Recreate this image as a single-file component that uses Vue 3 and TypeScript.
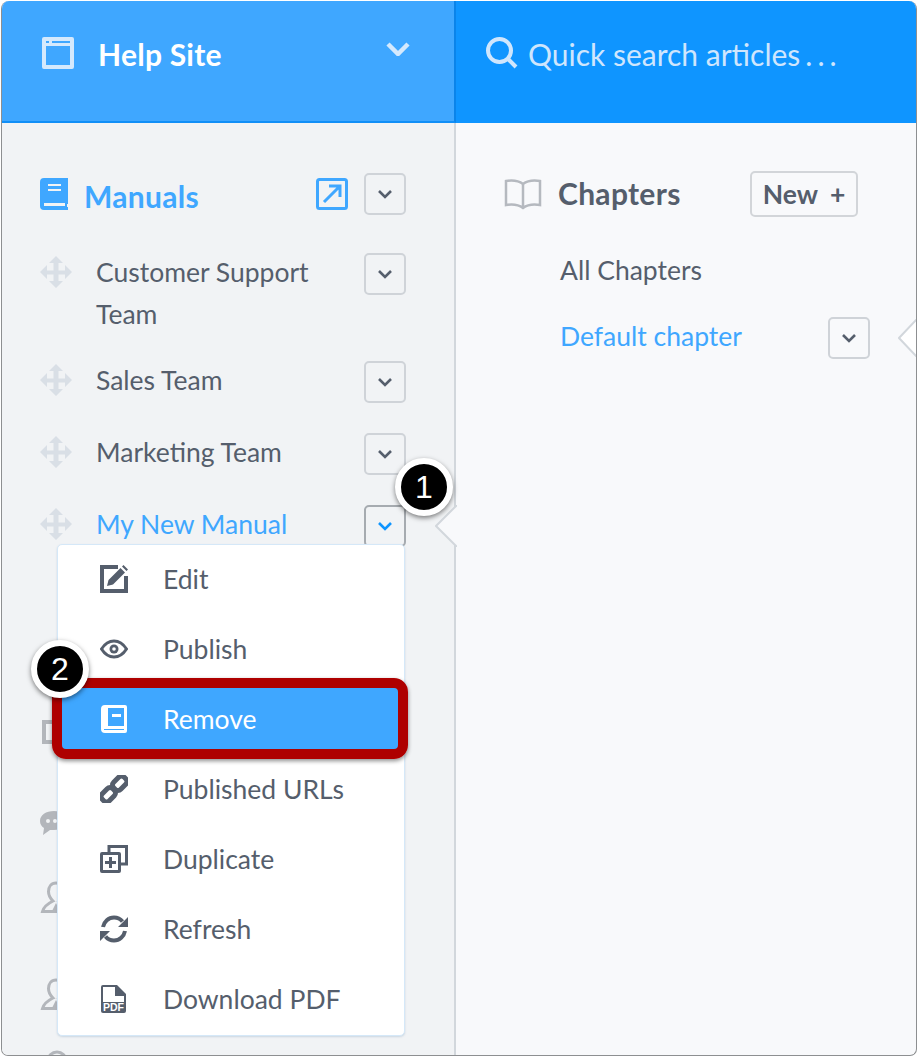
<script setup lang="ts">
interface MenuItem {
  label: string
  icon: string
  active?: boolean
}

const manuals = [
  { name: 'Customer Support Team' },
  { name: 'Sales Team' },
  { name: 'Marketing Team' },
  { name: 'My New Manual', active: true },
]

const menuItems: MenuItem[] = [
  { label: 'Edit', icon: 'edit' },
  { label: 'Publish', icon: 'eye' },
  { label: 'Remove', icon: 'book', active: true },
  { label: 'Published URLs', icon: 'link' },
  { label: 'Duplicate', icon: 'copy' },
  { label: 'Refresh', icon: 'refresh' },
  { label: 'Download PDF', icon: 'pdf' },
]
</script>

<template>
  <div class="window">
    <header class="topbar">
      <div class="site">
        <svg class="site-icon" viewBox="0 0 32 32">
          <path fill-rule="evenodd" d="M2 0h28a2 2 0 0 1 2 2v28a2 2 0 0 1-2 2H2a2 2 0 0 1-2-2V2a2 2 0 0 1 2-2zM4 9v19h24V9zM4 4v2h3V4zm6 0v2h18V4z" />
        </svg>
        <span class="site-name">Help Site</span>
        <svg class="site-chevron" viewBox="0 0 24 14">
          <path d="M2 2l10 10L22 2" />
        </svg>
      </div>
      <div class="search">
        <svg class="search-icon" viewBox="0 0 32 32">
          <circle cx="13.5" cy="13.5" r="11.5" />
          <path d="M22 22l8 8" />
        </svg>
        <span>Quick search articles<span class="dots">...</span></span>
      </div>
    </header>

    <div class="content">
      <aside class="sidebar">
        <div class="section-head">
          <svg class="book-icon" viewBox="0 0 28 32">
            <path fill-rule="evenodd" d="M4 0h24v26h-1v3h1v3H4a4 4 0 0 1-4-4V4a4 4 0 0 1 4-4zM8 6v2h13V6zm0 5v2h13v-2zM4 25v3h21v-3z" />
          </svg>
          <span class="section-title">Manuals</span>
          <svg class="open-icon" viewBox="0 0 32 32">
            <rect x="1.5" y="1.5" width="29" height="29" rx="2" />
            <path d="M8 24L23 9M13 8h11v11" />
          </svg>
          <button class="chevron-btn" type="button">
            <svg viewBox="0 0 14 9"><path d="M1 1l6 6 6-6" /></svg>
          </button>
        </div>

        <ul class="manuals">
          <li v-for="manual in manuals" :key="manual.name" class="manual" :class="{ active: manual.active }">
            <svg class="move-icon" viewBox="0 0 32 32">
              <path d="M16 0l7 7h-4.500v7.500H25V9l7 7-7 7v-4.500h-6.500V25H23l-7 7-7-7h4.500v-6.500H7V23l-7-7 7-7v5.500h6.500V7H9z" />
            </svg>
            <span class="manual-name">{{ manual.name }}</span>
            <button class="chevron-btn" type="button">
              <svg viewBox="0 0 14 9"><path d="M1 1l6 6 6-6" /></svg>
            </button>
          </li>
        </ul>

        <div class="nav-icons">
          <svg class="nav-box" viewBox="0 0 28 24">
            <path d="M2 2h24v20H2zM12 2v20" />
          </svg>
          <svg class="nav-chat" viewBox="0 0 28 24">
            <path fill-rule="evenodd" d="M14 0C6 0 0 4 0 10c0 3 1.500 5.500 4 7l-1 7 7-5h4c8 0 14-4 14-9S22 0 14 0zM8 8a2 2 0 1 0 0 4 2 2 0 0 0 0-4zm7 0a2 2 0 1 0 0 4 2 2 0 0 0 0-4z" />
          </svg>
          <svg class="nav-person" viewBox="0 0 32 32">
            <path class="person-line" d="M16 2c5 0 7.500 4 7.500 8.500S21 18 19 20c3 1.500 9 4.500 10.500 10.500h-27C4 24.500 10 21.500 13 20c-2-2-4.500-5-4.500-9.500S11 2 16 2z" />
            <path d="M16 22l4 8h-8z" />
          </svg>
          <svg class="nav-person" viewBox="0 0 32 32">
            <path class="person-line" d="M16 2c5 0 7.500 4 7.500 8.500S21 18 19 20c3 1.500 9 4.500 10.500 10.500h-27C4 24.500 10 21.500 13 20c-2-2-4.500-5-4.500-9.500S11 2 16 2z" />
            <path d="M16 22l4 8h-8z" />
          </svg>
          <svg class="nav-circle" viewBox="0 0 24 24">
            <circle class="person-line" cx="12" cy="11" r="9" />
          </svg>
        </div>
      </aside>

      <section class="chapters">
        <div class="chapters-head">
          <svg class="open-book" viewBox="0 0 38 32">
            <path d="M19 6C15 3 8 2 2 3v24c6-1 13 0 17 3 4-3 11-4 17-3V3c-6-1-13 0-17 3zM19 6v24" />
          </svg>
          <span class="chapters-title">Chapters</span>
          <button class="new-btn" type="button">New <i>+</i></button>
        </div>
        <div class="chapter">All Chapters</div>
        <div class="chapter current">
          <span>Default chapter</span>
          <button class="chevron-btn" type="button">
            <svg viewBox="0 0 14 9"><path d="M1 1l6 6 6-6" /></svg>
          </button>
        </div>
      </section>
    </div>

    <svg class="notch notch-sidebar" viewBox="0 0 22 42">
      <path class="notch-fill" d="M22 0L1 21l21 21z" />
      <path class="notch-line" d="M22 0L1 21l21 21" />
    </svg>
    <svg class="notch notch-chapters" viewBox="0 0 19 38">
      <path class="notch-fill white" d="M19 0L1 19l18 19z" />
      <path class="notch-line" d="M19 0L1 19l18 19" />
    </svg>

    <ul class="menu">
      <li v-for="item in menuItems" :key="item.label" class="menu-item" :class="{ active: item.active }">
        <svg class="menu-icon" viewBox="0 0 28 28">
          <template v-if="item.icon === 'edit'">
            <path class="line heavy" d="M18 2H2v24h24V11" />
            <path d="M7 21l1.500-6L20.500 3l4.500 4.500L13 19.500zM22 1.500L23.500 0 28 4.500 26.500 6z" />
          </template>
          <template v-else-if="item.icon === 'eye'">
            <path class="line" d="M1.500 14C5 8.500 9 6 14 6s9 2.500 12.500 8C23 19.500 19 22 14 22S5 19.500 1.500 14z" />
            <circle cx="14" cy="14" r="4.500" />
            <circle class="eye-dot" cx="14" cy="14" r="1.800" />
          </template>
          <template v-else-if="item.icon === 'book'">
            <path fill-rule="evenodd" d="M5 0h20a2 2 0 0 1 2 2v24a2 2 0 0 1-2 2H5a4 4 0 0 1-4-4V4a4 4 0 0 1 4-4zM8 3v18h16V3zM12 9h9v3h-9zM4 24v1h20v-1z" />
          </template>
          <template v-else-if="item.icon === 'link'">
            <g class="line chain">
              <rect x="-8.500" y="-5" width="15" height="10" rx="4" transform="translate(9 19) rotate(-45)" />
              <rect x="-6.500" y="-5" width="15" height="10" rx="4" transform="translate(19 9) rotate(-45)" />
            </g>
          </template>
          <template v-else-if="item.icon === 'copy'">
            <path class="line" d="M9 7V1.500h17.500V19H21" />
            <path fill-rule="evenodd" d="M2 7h17a2 2 0 0 1 2 2v17a2 2 0 0 1-2 2H2a2 2 0 0 1-2-2V9a2 2 0 0 1 2-2zM3 10v15h15V10zM9 12v4H5v3h4v4h3v-4h4v-3h-4v-4z" />
          </template>
          <template v-else-if="item.icon === 'refresh'">
            <path class="line heavy" d="M3 12C4 6.500 8.500 2.500 14 2.500c3.500 0 6.500 1.500 8.500 4M25 16c-1 5.500-5.500 9.500-11 9.500-3.500 0-6.500-1.500-8.500-4" />
            <path d="M28 2v10H18zM0 26V16h10z" />
          </template>
          <template v-else>
            <path d="M3 0h14l9 9v17a2 2 0 0 1-2 2H3a2 2 0 0 1-2-2V2a2 2 0 0 1 2-2z" />
            <path class="eye-dot" d="M3 2h12v9h9v6H3z" />
            <text class="pdf-label" x="13.500" y="25.500" text-anchor="middle">PDF</text>
          </template>
        </svg>
        <span class="menu-label">{{ item.label }}</span>
      </li>
    </ul>

    <div class="highlight"></div>
    <div class="callout callout-one">1</div>
    <div class="callout callout-two">2</div>
  </div>
</template>

<style scoped>
.window {
  position: relative;
  width: 916px;
  height: 1055px;
  margin: 1px 0 0 1px;
  overflow: hidden;
  border-radius: 8px 8px 7px 7px;
  box-sizing: border-box;
  border: solid #8d8f91;
  border-width: 0 1px 1px 1px;
  font-family: Lato, "Noto Sans", sans-serif;
  font-size: 26.5px;
  color: #555e6c;
  background: #f8f9fb;
}

.topbar {
  display: flex;
  height: 122px;
}

.site {
  display: flex;
  width: 454px;
  padding: 36px 44px 0 40px;
  box-sizing: border-box;
  background: #3fa7ff;
  border-right: 2px solid #0a84ea;
  border-bottom: 2px solid #118ff7;
}

.site-icon {
  width: 32px;
  height: 32px;
  fill: #d4e9fd;
}

.site-name {
  margin: -1px 0 0 24px;
  font-size: 30px;
  font-weight: 700;
  letter-spacing: 0.25px;
  line-height: 36px;
  color: #fff;
}

.site-chevron {
  width: 24px;
  height: 14px;
  margin: 5px 0 0 auto;
  fill: none;
  stroke: #d4e9fd;
  stroke-width: 4.5;
}

.search {
  display: flex;
  flex: 1;
  gap: 10px;
  padding: 35px 0 0 30px;
  background: #0f95ff;
  font-size: 30px;
  line-height: 36px;
  color: #cfe6fd;
}

.search-icon {
  width: 32px;
  height: 32px;
  margin-top: 1px;
  fill: none;
  stroke: #cfe6fd;
  stroke-width: 4;
}

.dots {
  margin-left: 5px;
  letter-spacing: 5px;
}

.content {
  display: flex;
  height: 932px;
}

.sidebar {
  width: 454px;
  padding: 49px 48px 0 38px;
  box-sizing: border-box;
  background: #f1f3f5;
  border-right: 2px solid #d2d7dc;
}

.section-head {
  display: flex;
  align-items: center;
  height: 44px;
  margin-bottom: 35px;
}

.book-icon {
  width: 28px;
  height: 32px;
  fill: #3fa7ff;
}

.section-title {
  margin: 3px 0 0 16px;
  font-size: 30px;
  font-weight: 700;
  letter-spacing: 0.3px;
  color: #3fa7ff;
}

.open-icon {
  width: 32px;
  height: 32px;
  margin-left: auto;
  margin-right: 16px;
  fill: none;
  stroke: #3fa7ff;
  stroke-width: 3;
}

.chevron-btn {
  display: flex;
  flex: none;
  align-items: center;
  justify-content: center;
  width: 42px;
  height: 42px;
  padding: 0;
  box-sizing: border-box;
  border: 2px solid #cfd3d8;
  border-radius: 5px;
  background: transparent;
}

.chevron-btn svg {
  width: 14px;
  height: 9px;
  fill: none;
  stroke: #555e6c;
  stroke-width: 2.6;
}

.manuals {
  margin: 0;
  padding: 0;
  list-style: none;
}

.manual {
  display: flex;
  align-items: flex-start;
  min-height: 48px;
  margin-bottom: 24px;
  line-height: 42px;
}

.manual .chevron-btn {
  margin-top: 2px;
}

.manual-name {
  width: 268px;
  margin-left: 24px;
}

.move-icon {
  flex: none;
  width: 32px;
  height: 32px;
  margin-top: 5px;
  fill: #d9dfe6;
}

.manual.active .manual-name {
  color: #3fa7ff;
}

.manual.active .chevron-btn {
  border-color: #a6abb0;
}

.manual.active .chevron-btn svg {
  stroke: #0f95ff;
}

.nav-icons {
  display: grid;
  grid-template-rows: 91px 70px 97px 72px;
  padding-top: 145px;
}

.nav-icons svg {
  fill: #b3b6bb;
}

.nav-box {
  width: 28px;
  height: 24px;
  margin-left: 2px;
}

.nav-box path {
  fill: none;
  stroke: #b3b6bb;
  stroke-width: 4;
}

.nav-chat {
  width: 28px;
  height: 24px;
}

.nav-person {
  width: 32px;
  height: 32px;
}

.nav-circle {
  width: 24px;
  height: 24px;
  margin-left: 5px;
}

.person-line {
  fill: none;
  stroke: #b3b6bb;
  stroke-width: 3;
}

.chapters {
  flex: 1;
  padding: 48px 58px 0 48px;
}

.chapters-head {
  display: flex;
  align-items: center;
  height: 46px;
  margin-bottom: 32px;
}

.open-book {
  width: 38px;
  height: 32px;
  fill: none;
  stroke: #b5b9bf;
  stroke-width: 2.500;
}

.chapters-title {
  margin: -2px 0 0 16px;
  font-size: 30px;
  font-weight: 700;
  letter-spacing: 0.3px;
}

.new-btn {
  width: 108px;
  height: 46px;
  margin-left: auto;
  padding: 0;
  box-sizing: border-box;
  border: 2px solid #d2d5d9;
  border-radius: 5px;
  background: transparent;
  font: inherit;
  font-weight: 700;
  color: #555e6c;
}

.new-btn i {
  margin-left: 6px;
  font-style: normal;
}

.chapter {
  display: flex;
  align-items: flex-start;
  justify-content: space-between;
  margin-left: 56px;
  line-height: 42px;
  margin-bottom: 24px;
}

.chapter.current {
  margin-right: -12px;
  color: #3fa7ff;
}

.chapter .chevron-btn {
  margin-top: 2px;
}

.notch {
  position: absolute;
}

.notch-sidebar {
  left: 433px;
  top: 504px;
  width: 22px;
  height: 42px;
}

.notch-chapters {
  left: 896px;
  top: 318px;
  width: 19px;
  height: 38px;
}

.notch-fill {
  fill: #f8f9fb;
}

.notch-fill.white {
  fill: #fff;
}

.notch-line {
  fill: none;
  stroke: #d2d7dc;
  stroke-width: 2;
}

.menu {
  position: absolute;
  left: 55px;
  top: 543px;
  width: 346px;
  margin: 0;
  padding: 0;
  list-style: none;
  background: #fff;
  border: 1px solid #d5e8f8;
  border-radius: 5px;
  box-shadow: 0 1px 2px rgba(90, 130, 170, 0.25);
}

.menu-item {
  display: flex;
  align-items: center;
  height: 70px;
  padding-left: 42px;
}

.menu-label {
  margin-top: -2px;
}

.menu-icon {
  flex: none;
  width: 28px;
  height: 28px;
  margin: -2px 35px 0 0;
  fill: #555e6c;
}

.menu-icon .line {
  fill: none;
  stroke: #555e6c;
  stroke-width: 3;
}

.menu-icon .line.heavy {
  stroke-width: 4;
}

.menu-icon .line.chain {
  stroke-width: 5;
}

.menu-icon .eye-dot {
  fill: #fff;
}

.pdf-label {
  font-family: "Liberation Sans", sans-serif;
  font-size: 10.5px;
  font-weight: 700;
  fill: #fff;
}

.menu-item.active {
  background: #3fa7ff;
  color: #fff;
}

.menu-item.active .menu-icon {
  fill: #fff;
}

.highlight {
  position: absolute;
  left: 50px;
  top: 677px;
  width: 356px;
  height: 81px;
  box-sizing: border-box;
  border: 10px solid #ae0000;
  border-radius: 14px;
  box-shadow: 0 2px 4px rgba(0, 0, 0, 0.45);
}

.callout {
  position: absolute;
  width: 58px;
  height: 58px;
  box-sizing: border-box;
  border: 6px solid #fff;
  border-radius: 50%;
  background: #000;
  box-shadow: 0 2px 5px rgba(0, 0, 0, 0.5);
  font-family: "Liberation Sans", sans-serif;
  font-size: 32px;
  line-height: 46px;
  text-align: center;
  color: #fff;
}

.callout-one {
  left: 393px;
  top: 457px;
}

.callout-two {
  left: 29px;
  top: 639px;
}
</style>
